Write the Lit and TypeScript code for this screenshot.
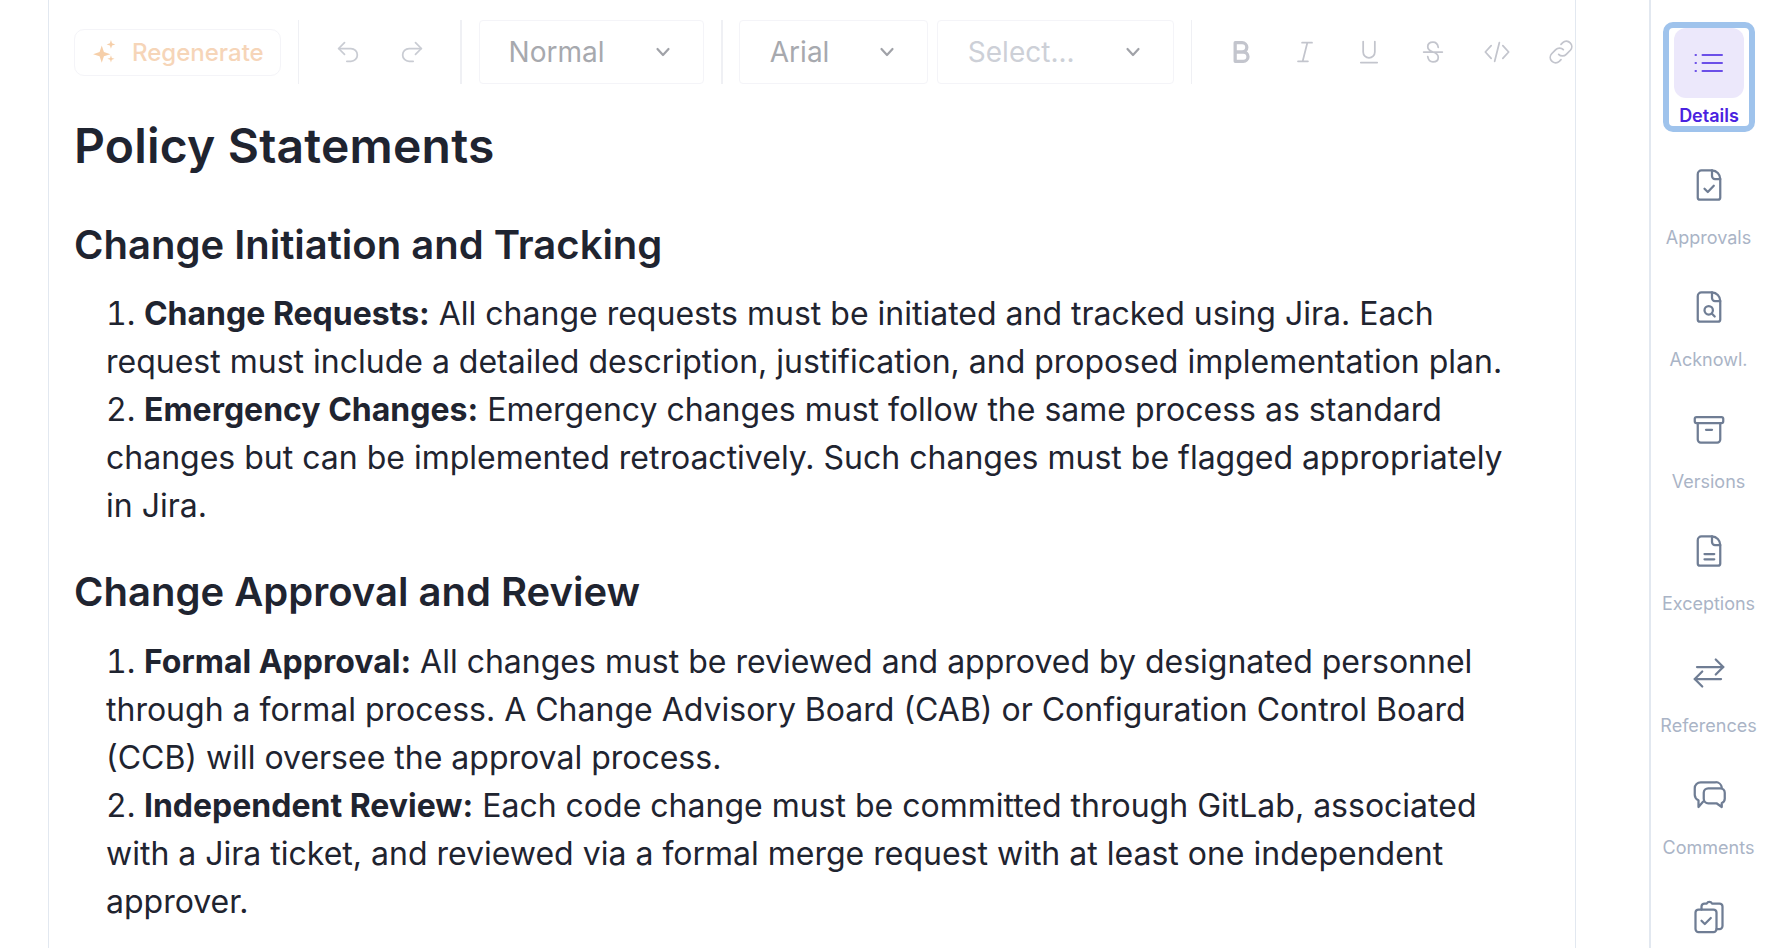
import { LitElement, html, css, svg } from "lit";
import { customElement } from "lit/decorators.js";

const chevron = html`<svg class="chev" width="20" height="20" viewBox="0 0 20 20" fill="none" stroke="currentColor" stroke-width="2.2" stroke-linecap="round" stroke-linejoin="round"><path d="M4.500 7 10 13l5.500-6"/></svg>`;

const doc = svg`<path d="M14 2.250H7a2.500 2.500 0 0 0-2.500 2.500V20.250a1.500 1.500 0 0 0 1.500 1.500h12a1.500 1.500 0 0 0 1.500-1.500V8a5.800 5.800 0 0 0-5.500-5.750z"/><path d="M14 2.250V6a2 2 0 0 0 2 2h3.500"/>`;

const navItems = [
  { label: "Approvals", icon: svg`${doc}<path d="m9 14.500 2.200 2.200 4-4.200"/>` },
  { label: "Acknowl.", icon: svg`${doc}<circle cx="11.800" cy="14.200" r="2.800"/><path d="m14 16.500 1.800 1.800"/>` },
  { label: "Versions", icon: svg`<rect x="2.500" y="4" width="19" height="4" rx="1.200"/><path d="M4.500 8v11a2 2 0 0 0 2 2h11a2 2 0 0 0 2-2V8"/><path d="M10 12.500h4"/>` },
  { label: "Exceptions", icon: svg`${doc}<path d="M9 14h6.500M9 17.500h6.500"/>` },
  { label: "References", icon: svg`<path d="M4 8h17.500"/><path d="m16.500 3 5 5-5 5"/><path d="M20 16H2.500"/><path d="m7.500 11-5 5 5 5"/>` },
  { label: "Comments", icon: svg`<path d="M8 16.500 5 20v-4.500A4 4 0 0 1 2.500 12V7.500a4 4 0 0 1 4-4h10a4 4 0 0 1 4 3.500"/><path d="M11.500 7.500h8a3 3 0 0 1 3 3v4a3 3 0 0 1-2 2.800V20l-3.500-2.500h-5.500a3 3 0 0 1-3-3v-4a3 3 0 0 1 3-3z"/>` },
  { label: "", icon: svg`<rect x="3" y="7" width="14" height="15" rx="2"/><path d="M7 7V5a2 2 0 0 1 2-2h1.500a2 2 0 0 1 3.500 0H19a2 2 0 0 1 2 2v13a2 2 0 0 1-2 2h-2"/><path d="m7 14.500 2.200 2.200 4-4"/>` },
];

@customElement("app-root")
export class AppRoot extends LitElement {
  static styles = css`
    :host { display: block; height: 948px; overflow: hidden; background: #fff; font-family: Inter, "Liberation Sans", sans-serif; color: #1f2430; }
    .page { display: flex; height: 948px; padding-left: 48px; box-sizing: border-box; }
    .editor { width: 1528px; flex: none; box-sizing: border-box; border-left: 1.500px solid #e2e8f0; border-right: 1.500px solid #e2e8f0; padding: 0 0 0 25px; overflow: hidden; }
    .toolbar { display: flex; align-items: center; height: 64px; margin-top: 20px; white-space: nowrap; }
    .regen { display: flex; align-items: center; gap: 14px; box-sizing: border-box; width: 208px; height: 47px; padding-left: 17px; border: 1.500px solid #f4f4f8; border-radius: 10px; color: #f6d5b8; font-size: 24px; font-weight: 500; }
    .div { width: 1.500px; height: 64px; background: #eff0f4; flex: none; }
    .undo { display: flex; gap: 36px; margin: 0 34px 0 35px; color: #c9ccd3; }
    .sel { display: flex; align-items: center; justify-content: space-between; box-sizing: border-box; height: 64px; border: 1.500px solid #f4f4f8; border-radius: 4px; font-size: 28px; color: #a7a9ae; padding: 0 30px; }
    .sel.s1 { width: 227px; margin-left: 17px; padding-left: 29px; }
    .sel.s2 { width: 190px; margin-left: 16px; }
    .sel.s3 { width: 238px; margin-left: 9px; }
    .sel .chev { color: #a0a2a8; }
    .ph { color: #cdd0d7; }
    .d1 { margin-left: 17px; }
    .d2 { margin-left: 17px; }
    .d3 { margin-left: 17px; }
    .fmt { display: flex; align-items: center; gap: 36px; margin-left: 35px; color: #c3c5cd; }
    .page svg { flex: none; }
    h1 { font-size: 48px; line-height: 60px; font-weight: 600; margin: 32px 0 0; letter-spacing: 0.2px; }
    h2 { font-size: 40px; line-height: 48px; font-weight: 600; margin: 38px 0 0; }
    h1 + h2 { margin-top: 45px; }
    ol { margin: 21px 0 0; padding: 0 0 0 32px; list-style-position: inside; width: 1416px; }
    ol.second { margin-top: 22px; }
    li { font-size: 32px; line-height: 48px; color: #1f2430; }
    b { font-weight: 700; }
    .side { width: 119px; flex: none; margin-left: 73px; border-left: 2px solid #e2e8f0; box-sizing: border-box; }
    .details { box-sizing: border-box; width: 92px; height: 110px; margin: 22px 0 0 12px; border: 6px solid #9fc3ec; border-radius: 10px; display: flex; flex-direction: column; align-items: center; }
    .tile { width: 70px; height: 70px; border-radius: 12px; background: #ece8fb; display: flex; align-items: center; justify-content: center; color: #6b4fe8; flex: none; }
    .details span { font-size: 18px; font-weight: 600; color: #4a22e0; line-height: 22px; margin-top: 7px; }
    .item { display: flex; flex-direction: column; align-items: center; width: 119px; height: 122px; color: #6f7d94; }
    .items { margin-top: 35px; margin-left: -2px; }
    .item span { font-size: 18px; line-height: 24px; color: #aab4c6; margin-top: 23px; white-space: nowrap; }
  `;

  render() {
    return html`<div class="page">
      <main class="editor">
        <div class="toolbar">
          <div class="regen"><svg width="26" height="26" viewBox="0 0 24 24" fill="#f6cfa9"><path d="M9 6l2 6 6 2-6 2-2 6-2-6-6-2 6-2z"/><path d="M17.500 1l1 3 3 1-3 1-1 3-1-3-3-1 3-1zM17.500 15l.8 2.500 2.500.8-2.500.8-.8 2.500-.8-2.500-2.500-.8 2.500-.8z"/></svg>Regenerate</div>
          <div class="div d1"></div>
          <div class="undo">
            <svg width="28" height="28" viewBox="0 0 24 24" fill="none" stroke="currentColor" stroke-width="1.500" stroke-linecap="round" stroke-linejoin="round"><path d="M9 14 4 9l5-5"/><path d="M4 9h10.500a5.500 5.500 0 0 1 0 11H11"/></svg>
            <svg width="28" height="28" viewBox="0 0 24 24" fill="none" stroke="currentColor" stroke-width="1.500" stroke-linecap="round" stroke-linejoin="round"><path d="m15 14 5-5-5-5"/><path d="M20 9H9.500a5.500 5.500 0 0 0 0 11H13"/></svg>
          </div>
          <div class="div"></div>
          <div class="sel s1">Normal ${chevron}</div>
          <div class="div d2"></div>
          <div class="sel s2">Arial ${chevron}</div>
          <div class="sel s3 ph">Select... ${chevron}</div>
          <div class="div d3"></div>
          <div class="fmt">
            <svg width="28" height="28" viewBox="0 0 24 24" fill="none" stroke="currentColor" stroke-width="2.800" stroke-linejoin="round"><path d="M7 4h6a4 4 0 0 1 0 8H7zM7 12h7a4 4 0 0 1 0 8H7z"/></svg>
            <svg width="28" height="28" viewBox="0 0 24 24" fill="none" stroke="currentColor" stroke-width="1.500" stroke-linecap="round"><path d="M9.500 4H18M6 20h8.500M14 4l-4 16"/></svg>
            <svg width="28" height="28" viewBox="0 0 24 24" fill="none" stroke="currentColor" stroke-width="1.500" stroke-linecap="round"><path d="M7 3v9a5 5 0 0 0 10 0V3M5 21h14"/></svg>
            <svg width="28" height="28" viewBox="0 0 24 24" fill="none" stroke="currentColor" stroke-width="1.500" stroke-linecap="round"><path d="M4 12h16M16.500 8C16 5 14.500 3.500 12 3.500c-3 0-4.500 1.800-4.500 4 0 2 1.500 3.500 4.500 4.500 3 1 4.500 2.500 4.500 4.500 0 2.200-1.500 4-4.500 4-2.500 0-4-1.500-4.500-4.500"/></svg>
            <svg width="28" height="28" viewBox="0 0 24 24" fill="none" stroke="currentColor" stroke-width="1.500" stroke-linecap="round" stroke-linejoin="round"><path d="M7 6.500 2 12l5 5.500M17 6.500l5 5.500-5 5.500M14 4l-4 16"/></svg>
            <svg width="28" height="28" viewBox="0 0 24 24" fill="none" stroke="currentColor" stroke-width="1.500" stroke-linecap="round" stroke-linejoin="round"><path d="M10 14a4.500 4.500 0 0 0 6.500 0l3.500-3.500A4.600 4.600 0 0 0 13.500 4L12 5.500"/><path d="M14 10a4.500 4.500 0 0 0-6.500 0L4 13.500A4.600 4.600 0 0 0 10.500 20l1.500-1.500"/></svg>
          </div>
        </div>
        <h1>Policy Statements</h1>
        <h2>Change Initiation and Tracking</h2>
        <ol>
          <li><b>Change Requests:</b> All change requests must be initiated and tracked using Jira. Each request must include a detailed description, justification, and proposed implementation plan.</li>
          <li><b>Emergency Changes:</b> Emergency changes must follow the same process as standard changes but can be implemented retroactively. Such changes must be flagged appropriately in Jira.</li>
        </ol>
        <h2>Change Approval and Review</h2>
        <ol class="second">
          <li><b>Formal Approval:</b> All changes must be reviewed and approved by designated personnel through a formal process. A Change Advisory Board (CAB) or Configuration Control Board (CCB) will oversee the approval process.</li>
          <li><b>Independent Review:</b> Each code change must be committed through GitLab, associated with a Jira ticket, and reviewed via a formal merge request with at least one independent approver.</li>
        </ol>
      </main>
      <aside class="side">
        <div class="details">
          <div class="tile"><svg width="32" height="32" viewBox="0 0 32 32" fill="none" stroke="currentColor" stroke-width="2" stroke-linecap="round"><path d="M9.500 8H29M9.500 16H29M9.500 24H29M2.500 8h.5M2.500 16h.5M2.500 24h.5"/></svg></div>
          <span>Details</span>
        </div>
        <div class="items">
          ${navItems.map((n) => html`<div class="item"><svg width="36" height="36" viewBox="0 0 24 24" fill="none" stroke="currentColor" stroke-width="1.500" stroke-linecap="round" stroke-linejoin="round">${n.icon}</svg>${n.label ? html`<span>${n.label}</span>` : ""}</div>`)}
        </div>
      </aside>
    </div>`;
  }
}
